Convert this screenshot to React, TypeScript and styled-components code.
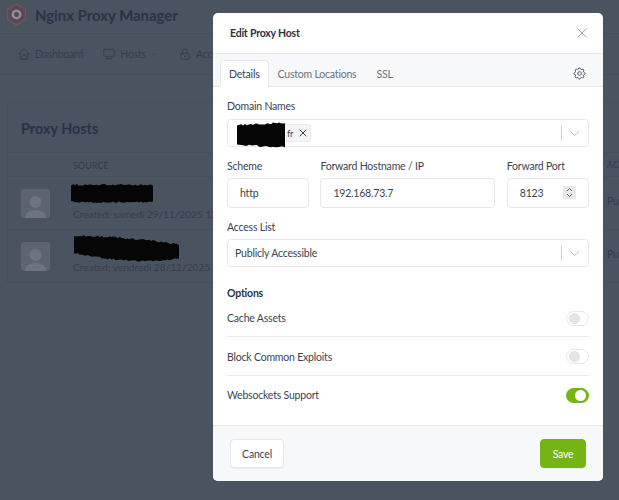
import React from "react";
import styled, { createGlobalStyle } from "styled-components";

const FONT = `"Lato", "Open Sans", "Liberation Sans", sans-serif`;

const Global = createGlobalStyle`
  html, body { margin: 0; padding: 0; background: #4a5360; }
  * { box-sizing: border-box; }
  body { font-family: ${FONT}; }
`;

const Page = styled.div`
  position: relative;
  width: 619px;
  height: 500px;
  overflow: hidden;
  background: #4a5360;
  color: #2d3748;
  font-size: 10.5px;
  letter-spacing: -0.2px;
`;
const TopBar = styled.div`
  height: 34px;
  display: flex;
  align-items: center;
  gap: 8px;
  padding: 0 6px 4px 6px;
  border-bottom: 1px solid #464f5c;
  font-size: 14.9px;
  font-weight: 700;
  letter-spacing: 0;
  color: #293445;
`;
const Nav = styled.div`
  height: 41px;
  display: flex;
  align-items: center;
  padding: 0 17px;
  gap: 19px;
  border-bottom: 1px solid #464f5c;
  color: #363f4e;
`;
const NavItem = styled.span`
  display: flex;
  align-items: center;
  gap: 4px;
  white-space: nowrap;
`;
const Card = styled.div`
  margin: 28px 0 0 7px;
  width: 640px;
  height: 180px;
  border-top: 1px solid #46583f;
  border-left: 1px solid #454e5b;
  border-bottom: 1px solid #454e5b;
  border-radius: 3px;
`;
const CardTitle = styled.div`
  height: 49px;
  padding-left: 13px;
  display: flex;
  align-items: center;
  font-size: 14.4px;
  font-weight: 700;
  letter-spacing: 0;
  color: #283244;
  border-bottom: 1px solid #454e5b;
`;
const TableHead = styled.div`
  height: 24px;
  padding: 1px 0 0 65px;
  display: flex;
  align-items: center;
  font-size: 8.8px;
  letter-spacing: 0.2px;
  color: #333c4a;
  border-bottom: 1px solid #454e5b;
  position: relative;
`;
const TableRow = styled.div<{ $last?: boolean }>`
  height: 53px;
  display: flex;
  align-items: center;
  padding-left: 13px;
  gap: 23px;
  position: relative;
  ${(p) => (p.$last ? "" : "border-bottom: 1px solid #454e5b;")}
`;
const Avatar = styled.div`
  width: 29px;
  height: 29px;
  flex: none;
  border-radius: 3px;
  background: #5c6470;
  overflow: hidden;
`;
const RowText = styled.div`
  display: flex;
  flex-direction: column;
  width: 540px;
`;
const Created = styled.div`
  font-size: 10.3px;
  letter-spacing: -0.1px;
  color: #363f4d;
  white-space: nowrap;
`;
const Blob = styled.svg<{ $shift?: number; $rise: number; $drop: number }>`
  display: block;
  flex: none;
  margin-left: ${(p) => p.$shift ?? 0}px;
  margin-top: ${(p) => p.$rise}px;
  margin-bottom: ${(p) => p.$drop}px;
`;
const SideCell = styled.div`
  position: absolute;
  left: 599px;
  top: 18px;
  width: 13px;
  color: #323b48;
  font-size: 10.5px;
`;
const SideHead = styled.span`
  position: absolute;
  left: 599px;
  width: 13px;
  top: 6px;
  font-size: 8.8px;
  color: #333c4a;
`;

const Modal = styled.div`
  position: absolute;
  left: 213px;
  top: 13px;
  width: 390px;
  height: 468px;
  background: #fff;
  border-radius: 5px;
  overflow: hidden;
  display: flex;
  flex-direction: column;
  color: #3b4453;
  font-size: 10.5px;
`;
const ModalHeader = styled.div`
  height: 41px;
  flex: none;
  display: flex;
  align-items: center;
  justify-content: space-between;
  padding: 0 13px 0 17px;
  border-bottom: 1px solid #e5e7eb;
  font-weight: 700;
  color: #2a3342;
`;
const CloseBtn = styled.span`
  display: flex;
  color: #8a919c;
`;
const Tabs = styled.div`
  height: 33px;
  flex: none;
  display: flex;
  align-items: flex-end;
  padding: 0 16px 0 7px;
  background: #f7f8fa;
  border-bottom: 1px solid #e5e7eb;
`;
const Tab = styled.div<{ $active?: boolean }>`
  height: ${(p) => (p.$active ? "27px" : "26px")};
  display: flex;
  align-items: center;
  padding: 0 ${(p) => (p.$active ? "8px" : "9px")};
  margin-right: ${(p) => (p.$active ? "0" : "2px")};
  color: ${(p) => (p.$active ? "#3b4453" : "#6b7280")};
  background: ${(p) => (p.$active ? "#fff" : "transparent")};
  border: ${(p) => (p.$active ? "1px solid #e5e7eb" : "none")};
  border-bottom: ${(p) => (p.$active ? "1px solid #fff" : "none")};
  border-radius: 4px 4px 0 0;
  margin-bottom: -1px;
  position: relative;
`;
const TabSpacer = styled.div`
  flex: 1;
`;
const GearWrap = styled.span`
  display: flex;
  align-self: center;
  color: #4b5563;
  margin-top: 6px;
`;
const Body = styled.div`
  flex: 1;
  padding: 12px 14px 0 14px;
  display: flex;
  flex-direction: column;
`;
const FieldLabel = styled.div<{ $gap?: number }>`
  height: 13px;
  line-height: 15px;
  margin-bottom: ${(p) => p.$gap ?? 6}px;
  color: #3b4453;
  white-space: nowrap;
`;
const FieldRow = styled.div`
  display: grid;
  grid-template-columns: 82px 175px 82px;
  column-gap: 11.4px;
  margin-top: 12px;
`;
const Field = styled.div<{ $mt?: number }>`
  margin-top: ${(p) => p.$mt ?? 0}px;
`;
const InputBox = styled.div<{ $h?: number; $pad?: number }>`
  height: ${(p) => p.$h ?? 29}px;
  border: 1px solid #e5e7eb;
  border-radius: 4px;
  display: flex;
  align-items: center;
  padding-left: ${(p) => p.$pad ?? 12}px;
  color: #3b4453;
  background: #fff;
  position: relative;
`;
const SelectArrow = styled.div`
  position: absolute;
  right: 0;
  top: 0;
  bottom: 0;
  width: 27px;
  display: flex;
  align-items: center;
  justify-content: center;
  color: #b6bbc3;
  &::before {
    content: "";
    position: absolute;
    left: 0;
    top: 6px;
    bottom: 6px;
    width: 1px;
    background: #c9cdd3;
  }
`;
const TagWrap = styled.div`
  position: relative;
  display: flex;
  align-items: center;
  height: 18px;
  margin-left: 2px;
  padding: 0 0 0 49px;
  width: 74px;
  background: #f3f4f6;
  border: 1px solid #e9ebef;
  border-radius: 3px;
  font-size: 9.4px;
  gap: 4px;
  color: #3b4453;
`;
const TagBlob = styled.svg`
  position: absolute;
  left: -2px;
  top: -4px;
`;
const Spinner = styled.div`
  position: absolute;
  right: 12px;
  top: 7px;
  width: 13px;
  height: 13px;
  background: #e9e9ed;
  color: #555;
  display: flex;
  align-items: center;
  justify-content: center;
`;
const OptionsTitle = styled.div`
  margin-top: 19px;
  font-weight: 700;
  color: #2a3342;
  height: 13px;
  line-height: 15px;
`;
const OptionRow = styled.div<{ $last?: boolean }>`
  height: 38.4px;
  padding-top: 1px;
  display: flex;
  align-items: center;
  justify-content: space-between;
  color: #3b4453;
  ${(p) => (p.$last ? "" : "border-bottom: 1px solid #e9ebef;")}
`;
const Toggle = styled.span<{ $on?: boolean }>`
  width: 23px;
  height: 15px;
  border-radius: 8px;
  display: flex;
  align-items: center;
  justify-content: ${(p) => (p.$on ? "flex-end" : "flex-start")};
  padding: 0 2px;
  background: ${(p) => (p.$on ? "#76b315" : "#fff")};
  border: 1px solid ${(p) => (p.$on ? "#76b315" : "#e5e7eb")};
  &::after {
    content: "";
    width: 11px;
    height: 11px;
    border-radius: 50%;
    background: ${(p) => (p.$on ? "#fff" : "#e3e4e8")};
  }
`;
const Footer = styled.div`
  height: 56px;
  flex: none;
  background: #f7f8fa;
  border-top: 1px solid #e5e7eb;
  display: flex;
  align-items: center;
  justify-content: space-between;
  padding: 0 17px;
`;
const CancelBtn = styled.div`
  width: 54px;
  height: 29px;
  border: 1px solid #e5e7eb;
  border-radius: 4px;
  background: #fff;
  display: flex;
  align-items: center;
  justify-content: center;
  box-shadow: 0 1px 1px rgba(0, 0, 0, 0.05);
`;
const SaveBtn = styled(CancelBtn)`
  width: 46px;
  background: #76b315;
  border-color: #76b315;
  color: #fff;
`;

type IconProps = { size?: number; sw?: number; paths: string[] };
const Tabler = ({ size = 14, sw = 1.5, paths }: IconProps) => (
  <svg width={size} height={size} viewBox="0 0 24 24" fill="none" stroke="currentColor" strokeWidth={sw} strokeLinecap="round" strokeLinejoin="round">
    {paths.map((d) => (
      <path key={d} d={d} />
    ))}
  </svg>
);

const HOME = ["M5 12l-2 0l9 -9l9 9l-2 0", "M5 12v7a2 2 0 0 0 2 2h10a2 2 0 0 0 2 -2v-7", "M9 21v-6a2 2 0 0 1 2 -2h2a2 2 0 0 1 2 2v6"];
const DESKTOP = ["M3 5a1 1 0 0 1 1 -1h16a1 1 0 0 1 1 1v10a1 1 0 0 1 -1 1h-16a1 1 0 0 1 -1 -1v-10z", "M7 20h10", "M9 16v4", "M15 16v4"];
const LOCK = ["M5 13a2 2 0 0 1 2 -2h10a2 2 0 0 1 2 2v6a2 2 0 0 1 -2 2h-10a2 2 0 0 1 -2 -2v-6z", "M11 16a1 1 0 1 0 2 0a1 1 0 0 0 -2 0", "M8 11v-4a4 4 0 1 1 8 0v4"];
const GEAR = [
  "M10.325 4.317c.426 -1.756 2.924 -1.756 3.35 0a1.724 1.724 0 0 0 2.573 1.066c1.543 -.94 3.31 .826 2.37 2.37a1.724 1.724 0 0 0 1.065 2.572c1.756 .426 1.756 2.924 0 3.35a1.724 1.724 0 0 0 -1.066 2.573c.94 1.543 -.826 3.31 -2.37 2.37a1.724 1.724 0 0 0 -2.572 1.065c-.426 1.756 -2.924 1.756 -3.35 0a1.724 1.724 0 0 0 -2.573 -1.066c-1.543 .94 -3.31 -.826 -2.37 -2.37a1.724 1.724 0 0 0 -1.065 -2.572c-1.756 -.426 -1.756 -2.924 0 -3.35a1.724 1.724 0 0 0 1.066 -2.573c-.94 -1.543 .826 -3.31 2.37 -2.37c1 .608 2.296 .07 2.572 -1.065z",
  "M9 12a3 3 0 1 0 6 0a3 3 0 0 0 -6 0",
];
const CHEVRON = ["M6 9l6 6l6 -6"];
const CLOSE = ["M18 6l-12 12", "M6 6l12 12"];

/* Marker scribble: a polygon with a rough, deterministic edge. */
const scribble = (top: (t: number) => number, bottom: (t: number) => number, x0: number, x1: number, seed: number) => {
  let s = seed;
  const rnd = () => {
    s = (s * 16807) % 2147483647;
    return (s % 1000) / 1000;
  };
  const pts: string[] = [];
  const steps = Math.round((x1 - x0) / 2);
  for (let i = 0; i <= steps; i++) {
    const t = i / steps;
    pts.push(`${(x0 + (x1 - x0) * t).toFixed(1)},${(top(t) + rnd() * 1.8).toFixed(1)}`);
  }
  for (let i = steps; i >= 0; i--) {
    const t = i / steps;
    pts.push(`${(x0 + (x1 - x0) * t).toFixed(1)},${(bottom(t) - rnd() * 1.8).toFixed(1)}`);
  }
  return pts.join(" ");
};

const BLOB_ONE = scribble(() => 1, () => 20, 1, 83, 11);
const BLOB_TWO = scribble(
  (t) => 2 + t * t * 9,
  (t) => 21 + 10 * Math.sin(t * Math.PI * 0.7) - t * 3,
  1,
  106,
  23,
);
const BLOB_TAG = scribble((t) => 3 - t * 2, (t) => 25 + t * 2, 1, 49, 37);

const Logo = () => (
  <svg width="21" height="23" viewBox="0 0 21 23">
    <path d="M10.5 1l9 5.2v10.600l-9 5.200-9-5.200V6.200z" fill="#5a4c5f" stroke="#6b5a4c" strokeWidth="1.2" />
    <path d="M10.5 3.500l6.800 4v8l-6.800 4-6.800-4v-8z" fill="#5f4058" />
    <circle cx="10.500" cy="11.500" r="5" fill="#8f8d95" />
    <circle cx="10.500" cy="11.500" r="2.400" fill="#4f4658" />
  </svg>
);

const AvatarArt = () => (
  <Avatar>
    <svg width="29" height="29" viewBox="0 0 29 29">
      <circle cx="14.500" cy="13" r="6" fill="#6d747f" />
      <path d="M4 29c0-5 4-8 10.500-8S25 24 25 29z" fill="#6d747f" />
    </svg>
  </Avatar>
);

export default function App() {
  return (
    <Page>
      <Global />
      <TopBar>
        <Logo />
        Nginx Proxy Manager
      </TopBar>
      <Nav>
        <NavItem>
          <Tabler paths={HOME} />
          Dashboard
        </NavItem>
        <NavItem>
          <Tabler paths={DESKTOP} />
          Hosts
          <Tabler paths={CHEVRON} size={9} />
        </NavItem>
        <NavItem>
          <Tabler paths={LOCK} />
          Access Lists
        </NavItem>
      </Nav>
      <Card>
        <CardTitle>Proxy Hosts</CardTitle>
        <TableHead>
          SOURCE
          <SideHead>AC</SideHead>
        </TableHead>
        <TableRow>
          <AvatarArt />
          <RowText>
            <Blob width="84" height="21" viewBox="0 0 84 21" $shift={-3} $rise={-4} $drop={4}>
              <polygon points={BLOB_ONE} fill="#050505" />
            </Blob>
            <Created>Created: samedi 29/11/2025 12:41</Created>
          </RowText>
          <SideCell>Pu</SideCell>
        </TableRow>
        <TableRow $last>
          <AvatarArt />
          <RowText>
            <Blob width="108" height="32" viewBox="0 0 108 32" $rise={-7.5} $drop={-3.5}>
              <polygon points={BLOB_TWO} fill="#060606" />
            </Blob>
            <Created>Created: vendredi 28/11/2025 8:02</Created>
          </RowText>
          <SideCell>Pu</SideCell>
        </TableRow>
      </Card>

      <Modal>
        <ModalHeader>
          Edit Proxy Host
          <CloseBtn>
            <Tabler paths={CLOSE} size={16} sw={1.2} />
          </CloseBtn>
        </ModalHeader>
        <Tabs>
          <Tab $active>Details</Tab>
          <Tab>Custom Locations</Tab>
          <Tab>SSL</Tab>
          <TabSpacer />
          <GearWrap>
            <Tabler paths={GEAR} size={15} />
          </GearWrap>
        </Tabs>
        <Body>
          <Field>
            <FieldLabel $gap={7}>Domain Names</FieldLabel>
            <InputBox $h={28} $pad={7}>
              <TagWrap>
                <TagBlob width="50" height="28" viewBox="0 0 50 28">
                  <polygon points={BLOB_TAG} fill="#050505" />
                </TagBlob>
                fr
                <Tabler paths={CLOSE} size={12} sw={2} />
              </TagWrap>
              <SelectArrow>
                <Tabler paths={CHEVRON} size={17} sw={1.3} />
              </SelectArrow>
            </InputBox>
          </Field>
          <FieldRow>
            <Field>
              <FieldLabel>Scheme</FieldLabel>
              <InputBox $h={30}>http</InputBox>
            </Field>
            <Field>
              <FieldLabel>Forward Hostname / IP</FieldLabel>
              <InputBox $h={30}>192.168.73.7</InputBox>
            </Field>
            <Field>
              <FieldLabel>Forward Port</FieldLabel>
              <InputBox $h={30}>
                8123
                <Spinner>
                  <svg width="9" height="11" viewBox="0 0 9 11" fill="none" stroke="currentColor" strokeWidth="0.9">
                    <path d="M2 4l2.500-2.500L7 4M2 7l2.500 2.500L7 7" />
                  </svg>
                </Spinner>
              </InputBox>
            </Field>
          </FieldRow>
          <Field $mt={12}>
            <FieldLabel>Access List</FieldLabel>
            <InputBox $h={28} $pad={7}>
              Publicly Accessible
              <SelectArrow>
                <Tabler paths={CHEVRON} size={17} sw={1.3} />
              </SelectArrow>
            </InputBox>
          </Field>
          <OptionsTitle>Options</OptionsTitle>
          <div>
            <OptionRow>
              Cache Assets
              <Toggle />
            </OptionRow>
            <OptionRow>
              Block Common Exploits
              <Toggle />
            </OptionRow>
            <OptionRow $last>
              Websockets Support
              <Toggle $on />
            </OptionRow>
          </div>
        </Body>
        <Footer>
          <CancelBtn>Cancel</CancelBtn>
          <SaveBtn>Save</SaveBtn>
        </Footer>
      </Modal>
    </Page>
  );
}
